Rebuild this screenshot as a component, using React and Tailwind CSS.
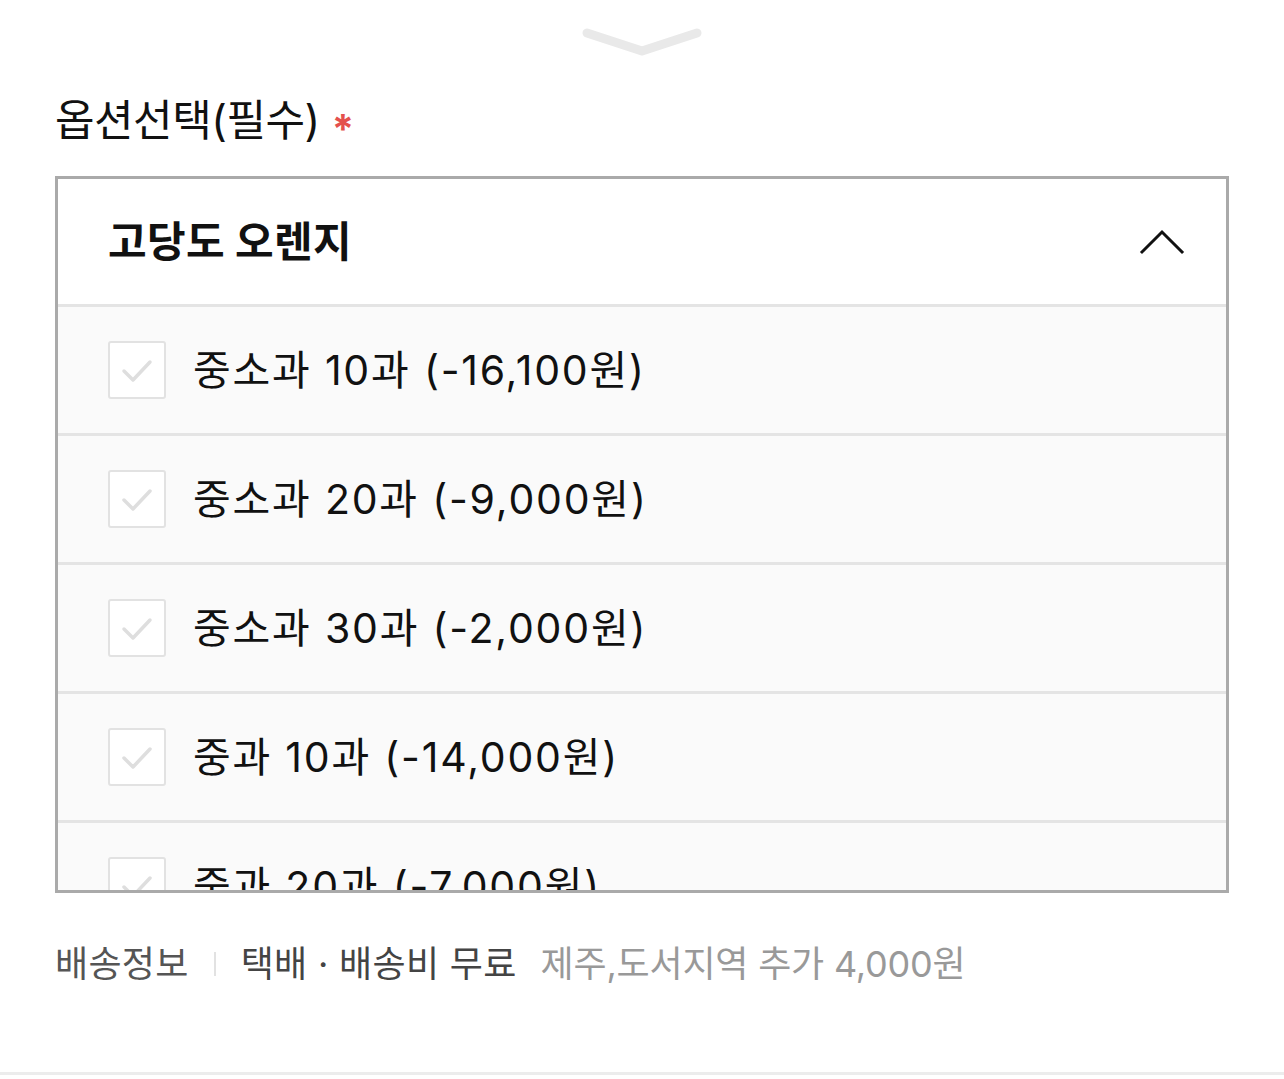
import React from "react";

const options = [
  "중소과 10과 (-16,100원)",
  "중소과 20과 (-9,000원)",
  "중소과 30과 (-2,000원)",
  "중과 10과 (-14,000원)",
  "중과 20과 (-7,000원)",
];

function CheckBox() {
  return (
    <div className="w-[58px] h-[58px] shrink-0 rounded-[3px] border-2 border-[#e2e2e2] bg-white flex items-center justify-center">
      <svg width="40" height="40" viewBox="0 0 40 40" fill="none">
        <polyline points="7,21 16,30 33,12" stroke="#dedede" strokeWidth="3.5" strokeLinecap="round" strokeLinejoin="round" />
      </svg>
    </div>
  );
}

export default function App() {
  return (
    <div
      className="w-[1284px] h-[1079px] bg-white overflow-hidden flex flex-col text-[#111]"
      style={{ fontFamily: 'Inter, "Noto Sans CJK KR", sans-serif' }}
    >
      <div className="flex justify-center pt-[24px] h-[70px]">
        <svg width="128" height="40" viewBox="0 0 128 40" fill="none">
          <polyline points="9,9 64,27 119,9" stroke="#e9e9e9" strokeWidth="9" strokeLinecap="round" strokeLinejoin="round" />
        </svg>
      </div>
      <div className="pl-[55px] h-[106px] flex items-start pt-[29px]">
        <span className="text-[43px] leading-none tracking-[-0.5px]">옵션선택(필수)</span>
        <span className="ml-[12px] text-[40px] leading-none text-[#e4514d] font-bold mt-[10px]">*</span>
      </div>
      <div className="mx-[55px] h-[717px] border-[3px] border-[#aaaaaa] overflow-hidden flex flex-col">
        <div className="h-[128px] shrink-0 flex items-center justify-between pl-[50px] pr-[41px] bg-white border-b-[3px] border-[#e4e4e4]">
          <span className="text-[42px] font-bold leading-none tracking-[0.3px]">고당도 오렌지</span>
          <svg width="46" height="30" viewBox="0 0 46 30" fill="none">
            <polyline points="3,25 23,5 43,25" stroke="#111" strokeWidth="3" strokeLinecap="square" />
          </svg>
        </div>
        {options.map((o) => (
          <div key={o} className="h-[129px] shrink-0 flex items-center pl-[50px] bg-[#fafafa] border-b-[3px] border-[#e4e4e4]">
            <CheckBox />
            <span className="ml-[27px] text-[41px] leading-none tracking-[1.8px]">{o}</span>
          </div>
        ))}
      </div>
      <div className="pl-[55px] mt-[53px] flex items-center text-[36px] leading-none tracking-[0.3px]">
        <span className="text-[#555]">배송정보</span>
        <span className="mx-[25px] w-[2px] h-[24px] bg-[#e2e2e2]" />
        <span className="text-[#444]">택배 · 배송비 무료</span>
        <span className="ml-[24px] text-[#999] tracking-[-0.2px]">제주,도서지역 추가 4,000원</span>
      </div>
      <div className="mt-auto mb-[4px] h-[3px] bg-[#ececec]" />
    </div>
  );
}
